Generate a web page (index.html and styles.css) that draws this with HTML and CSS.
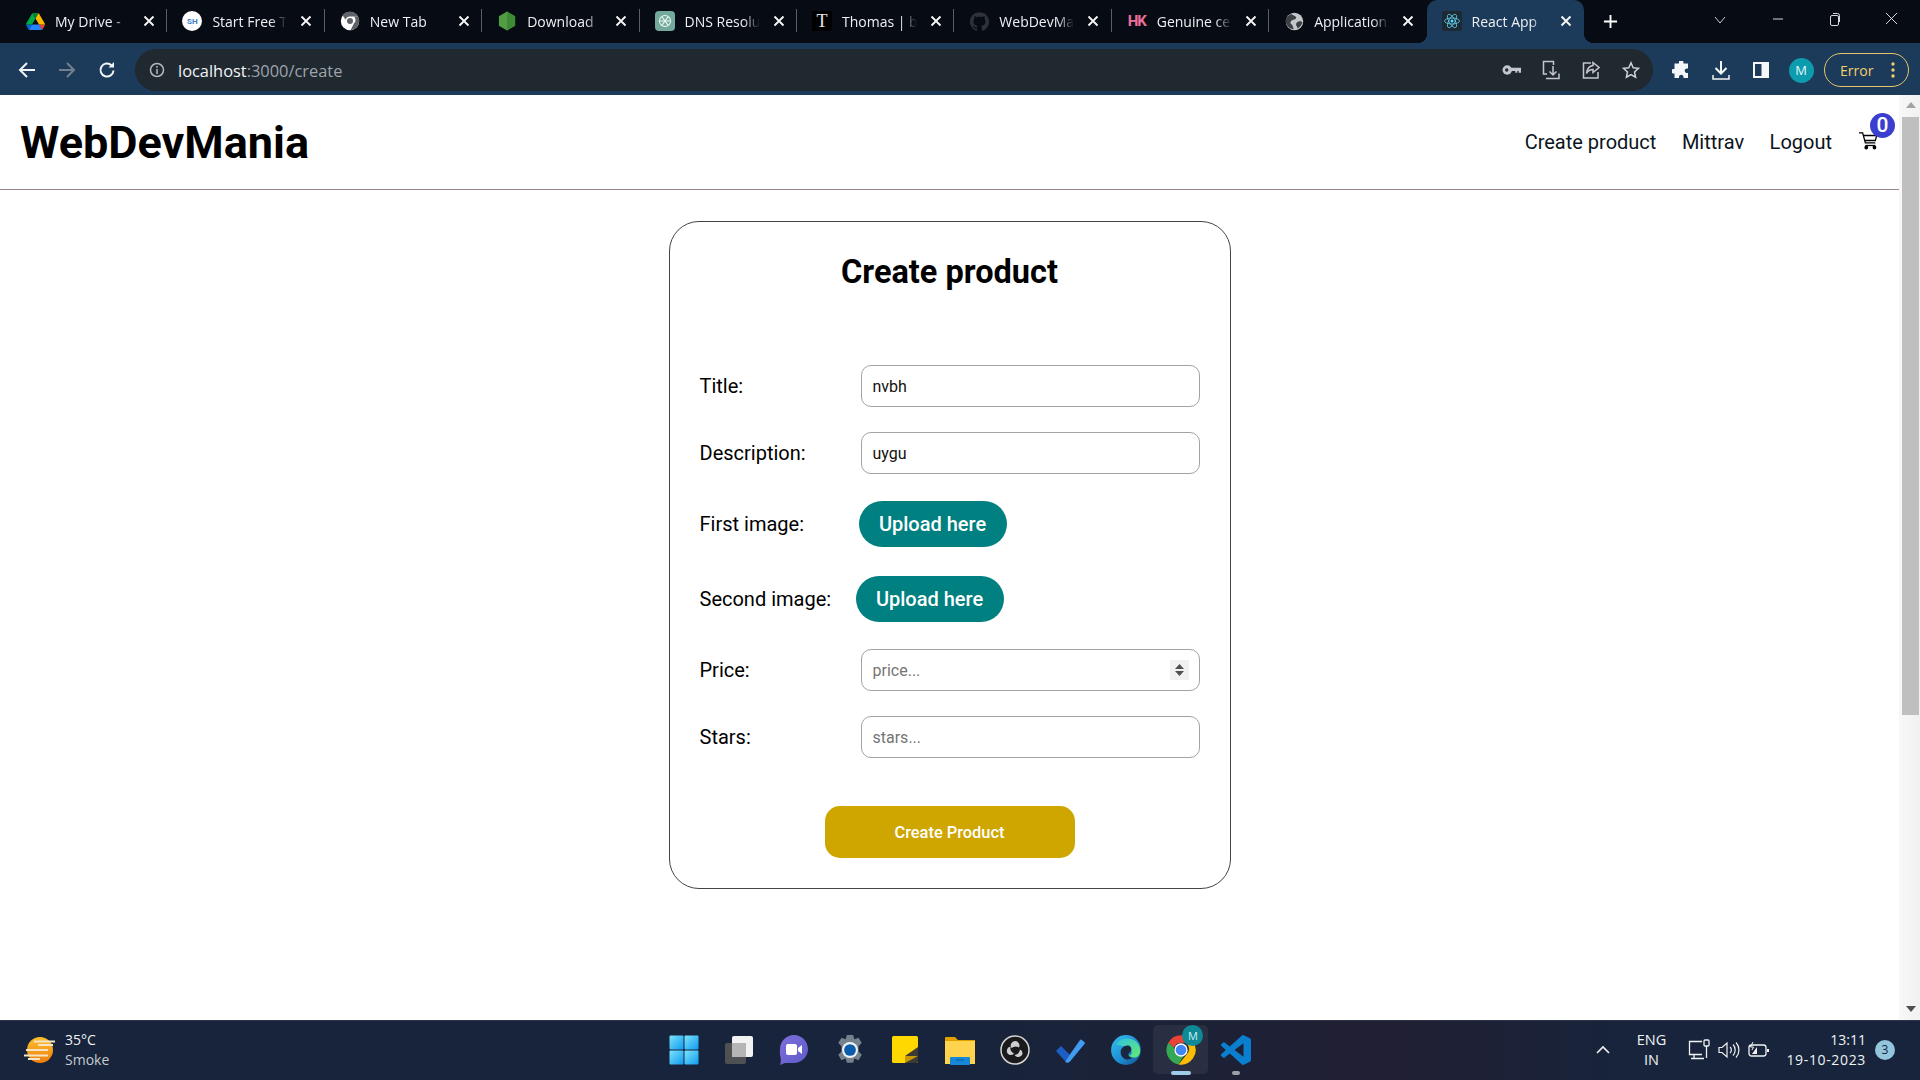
FILE: index.html
```html
<!DOCTYPE html>
<html lang="en">
<head>
<meta charset="utf-8">
<title>React App</title>
<link rel="stylesheet" href="styles.css">
</head>
<body>
<svg class="defs" width="0" height="0"><symbol id="close" viewBox="0 0 12 12"><path d="M1.500 1.500l9 9M10.500 1.500l-9 9" stroke="#f6f6f6" stroke-width="1.900" fill="none"/></symbol></svg>
<div class="tabstrip">
  <div class="tab"><span class="favicon"><svg viewBox="0 0 87.3 78" width="19" height="17"><path d="m6.6 66.85 3.85 6.65c.8 1.4 1.95 2.5 3.3 3.3l13.75-23.8h-27.5c0 1.55.4 3.1 1.2 4.5z" fill="#0066da"/><path d="m43.65 25-13.75-23.8c-1.35.8-2.5 1.9-3.3 3.3l-25.4 44a9.06 9.06 0 0 0 -1.2 4.5h27.5z" fill="#00ac47"/><path d="m73.55 76.8c1.35-.8 2.5-1.9 3.3-3.3l1.6-2.75 7.65-13.25c.8-1.4 1.2-2.95 1.2-4.5h-27.502l5.852 11.5z" fill="#ea4335"/><path d="m43.65 25 13.75-23.8c-1.35-.8-2.9-1.2-4.5-1.2h-18.5c-1.6 0-3.15.45-4.5 1.2z" fill="#00832d"/><path d="m59.8 53h-32.3l-13.75 23.8c1.35.8 2.9 1.2 4.5 1.2h50.8c1.6 0 3.15-.45 4.5-1.2z" fill="#2684fc"/><path d="m73.4 26.5-12.7-22c-.8-1.4-1.95-2.5-3.3-3.3l-13.75 23.8 16.15 28h27.45c0-1.55-.4-3.1-1.2-4.5z" fill="#ffba00"/></svg></span><span class="tab-title">My Drive -</span><svg class="tab-x"><use href="#close"/></svg></div>
  <div class="tab"><span class="favicon fav-sh">SH</span><span class="tab-title">Start Free T</span><svg class="tab-x"><use href="#close"/></svg></div>
  <div class="tab"><span class="favicon"><svg viewBox="0 0 24 24" width="20" height="20"><circle cx="12" cy="12" r="11" fill="#fff"/><path d="M12 1a11 11 0 0 1 9.6 5.600H12a5.500 5.500 0 0 0-5.300 4L3 5a11 11 0 0 1 9-4z" fill="#5f6368"/><path d="M21.600 6.600a11 11 0 0 1-9 16.400l4.200-8.200a5.500 5.500 0 0 0 0-8.200z" fill="#5f6368"/><circle cx="12" cy="12" r="3.600" fill="#5f6368"/></svg></span><span class="tab-title">New Tab</span><svg class="tab-x"><use href="#close"/></svg></div>
  <div class="tab"><span class="favicon"><svg viewBox="0 0 20 22" width="18" height="20"><path d="M10 0.500l9 5.200v10.600l-9 5.200-9-5.200V5.700z" fill="#539e43"/><path d="M10 0.500l9 5.200v10.600l-9 5.200z" fill="#3f8a37"/></svg></span><span class="tab-title">Download</span><svg class="tab-x"><use href="#close"/></svg></div>
  <div class="tab"><span class="favicon fav-gpt"><svg viewBox="0 0 20 20" width="16" height="16" fill="none" stroke="#e9f5f1" stroke-width="1.300"><circle cx="10" cy="10" r="7"/><path d="M6 4.500l8 11M14 4.500l-8 11M3 10h14"/></svg></span><span class="tab-title">DNS Resolu</span><svg class="tab-x"><use href="#close"/></svg></div>
  <div class="tab"><span class="favicon fav-t">T</span><span class="tab-title">Thomas | b</span><svg class="tab-x"><use href="#close"/></svg></div>
  <div class="tab"><span class="favicon"><svg viewBox="0 0 24 24" width="19" height="19"><path fill="#2f3338" d="M12 .297c-6.63 0-12 5.373-12 12 0 5.303 3.438 9.8 8.205 11.385.6.113.82-.258.82-.577 0-.285-.01-1.04-.015-2.04-3.338.724-4.042-1.61-4.042-1.61C4.422 18.070 3.633 17.700 3.633 17.700c-1.087-.744.084-.729.084-.729 1.205.084 1.838 1.236 1.838 1.236 1.070 1.835 2.809 1.305 3.495.998.108-.776.417-1.305.76-1.605-2.665-.3-5.466-1.332-5.466-5.930 0-1.310.465-2.380 1.235-3.220-.135-.303-.54-1.523.105-3.176 0 0 1.005-.322 3.300 1.230.96-.267 1.980-.399 3-.405 1.020.006 2.040.138 3 .405 2.280-1.552 3.285-1.230 3.285-1.230.645 1.653.24 2.873.12 3.176.765.84 1.230 1.910 1.230 3.220 0 4.610-2.805 5.625-5.475 5.920.42.36.81 1.096.81 2.220 0 1.606-.015 2.896-.015 3.286 0 .315.21.69.825.57C20.565 22.092 24 17.592 24 12.297c0-6.627-5.373-12-12-12"/></svg></span><span class="tab-title">WebDevMa</span><svg class="tab-x"><use href="#close"/></svg></div>
  <div class="tab"><span class="favicon fav-hk">HK</span><span class="tab-title">Genuine ce</span><svg class="tab-x"><use href="#close"/></svg></div>
  <div class="tab"><span class="favicon"><svg viewBox="0 0 24 24" width="19" height="19"><circle cx="12" cy="12" r="11" fill="#c4c7c9"/><path d="M8 2.500c2 2 5 2 6 4s-3 3-5 4-3 4-1 5 2 4 3 6c-5 0-9-4-10-9s3-8 7-10zM17 12c3-1 4 0 5 1-1 4-3 6-6 8 0-3-2-3-2-5s1-3 3-4z" fill="#3b4045"/></svg></span><span class="tab-title">Application</span><svg class="tab-x"><use href="#close"/></svg></div>
  <div class="tab tab-active"><span class="favicon fav-react"><svg viewBox="-12 -12 24 24" width="18" height="18" fill="none" stroke="#61dafb" stroke-width="1"><circle r="2" fill="#61dafb" stroke="none"/><ellipse rx="10" ry="4"/><ellipse rx="10" ry="4" transform="rotate(60)"/><ellipse rx="10" ry="4" transform="rotate(120)"/></svg></span><span class="tab-title">React App</span><svg class="tab-x"><use href="#close"/></svg></div>
  <div class="newtab"><svg viewBox="0 0 16 16" width="15" height="15"><path d="M8 1v14M1 8h14" stroke="#fff" stroke-width="2"/></svg></div>
  <div class="winctl">
    <span class="win-chevron"><svg viewBox="0 0 12 8" width="12" height="8" fill="none" stroke="#c8ccd0"><path d="M1 1l5 6 5-6"/></svg></span>
    <span class="winbtn"><svg viewBox="0 0 12 12" width="12" height="12"><path d="M1 6h10" stroke="#d6d8da"/></svg></span>
    <span class="winbtn"><svg viewBox="0 0 12 14" width="12" height="14" fill="none" stroke="#d6d8da"><rect x="1.500" y="3.500" width="8" height="10" rx="1.500"/><path d="M4 1.500h4.500a2 2 0 0 1 2 2V10"/></svg></span>
    <span class="winbtn"><svg viewBox="0 0 14 14" width="13" height="13"><path d="M1 1l12 12M13 1L1 13" stroke="#e8eaec"/></svg></span>
  </div>
</div>

<div class="toolbar">
  <span class="tbtn"><svg viewBox="0 0 18 18" width="18" height="18" fill="none" stroke="#f2f4f6" stroke-width="2"><path d="M17 9H2.500M9 2L2 9l7 7"/></svg></span>
  <span class="tbtn"><svg viewBox="0 0 18 18" width="18" height="18" fill="none" stroke="#73818f" stroke-width="2"><path d="M1 9h14.500M9 2l7 7-7 7"/></svg></span>
  <span class="tbtn"><svg viewBox="0 0 18 18" width="18" height="18" fill="none" stroke="#f2f4f6" stroke-width="2"><path d="M15.500 9.500a6.500 6.500 0 1 1-2-5.200"/><path d="M16 1v5.500h-5.500z" fill="#f2f4f6" stroke="none"/></svg></span>
  <div class="omnibox">
    <span class="omni-info"><svg viewBox="0 0 16 16" width="16" height="16" fill="none" stroke="#b4b9be" stroke-width="1.500"><circle cx="8" cy="8" r="6.500"/><path d="M8 7v5M8 4v1.700"/></svg></span>
    <span class="url"><span class="url-host">localhost</span>:3000/create</span>
    <span class="omni-actions">
      <span class="tbtn"><svg viewBox="0 0 20 12" width="19" height="12" fill="#c3c7cb"><circle cx="5.500" cy="6" r="5"/><path d="M9 3.500h11V9h-2.500V7h-1.500v2h-2V7H9z"/><circle cx="5" cy="6" r="1.800" fill="#202830"/></svg></span>
      <span class="tbtn"><svg viewBox="0 0 18 20" width="18" height="20" fill="none" stroke="#c3c7cb" stroke-width="1.500"><path d="M5 14H1.500V1.500h10V5"/><path d="M11 6v9M7.500 11.500l3.500 3.500 3.500-3.500"/><path d="M4 18.500h13v-5"/></svg></span>
      <span class="tbtn"><svg viewBox="0 0 18 18" width="18" height="18" fill="none" stroke="#c3c7cb" stroke-width="1.500"><path d="M9 2h-7.500v15h14.500v-6"/><path d="M11 1.500l6 5-6 5V8.500c-3 0-5 1-6.500 4C5 8 7 5 11 4.500z"/></svg></span>
      <span class="tbtn"><svg viewBox="0 0 18 18" width="18" height="18" fill="none" stroke="#d0d3d6" stroke-width="1.500"><path d="M9 1.800l2.200 4.900 5.300.6-4 3.600 1.100 5.300L9 13.500l-4.600 2.700 1.100-5.300-4-3.600 5.300-.6z"/></svg></span>
    </span>
  </div>
  <span class="tbtn tbtn-first"><svg viewBox="0 0 18 18" width="18" height="18" fill="#f4f6f8"><path d="M7 1a2.200 2.200 0 0 1 4.400 0v1.500H16v5h-1.500a2.300 2.300 0 0 0 0 4.500H16v5H11.500v-1.500a2.300 2.300 0 0 0-4.500 0V17H2.500v-4.500H1a2.300 2.300 0 0 1 0-4.500h1.500V2.500H7z"/></svg></span>
  <span class="tbtn"><svg viewBox="0 0 18 20" width="18" height="20" fill="none" stroke="#f4f6f8" stroke-width="2"><path d="M9 1v12M3.500 8L9 13.500 14.500 8"/><path d="M1 15v4h16v-4" stroke-width="1.500"/></svg></span>
  <span class="tbtn"><svg viewBox="0 0 16 16" width="16" height="16"><path d="M0 0h16v16H0z" fill="#f4f6f8"/><path d="M2 2h6.500v12H2z" fill="#1c3b5a"/></svg></span>
  <span class="tbtn"><span class="avatar">M</span></span>
  <div class="errpill"><span>Error</span><svg viewBox="0 0 4 16" width="4" height="16" fill="#f0cf6e"><circle cx="2" cy="2" r="1.700"/><circle cx="2" cy="8" r="1.700"/><circle cx="2" cy="14" r="1.700"/></svg></div>
</div>

<div class="viewport">
  <div class="page">
    <header class="header">
      <h1 class="brand">WebDevMania</h1>
      <nav class="nav">
        <a class="nav-link">Create product</a>
        <a class="nav-link">Mittrav</a>
        <a class="nav-link">Logout</a>
        <span class="cart">
          <svg viewBox="0 0 22 20" width="20" height="19" fill="none" stroke="#000" stroke-width="1.400"><path d="M0 1.500h4l3 11h11"/><path d="M5 4.500h14.500l-1.500 5.500H6.500"/><path d="M7 15.500h11"/><circle cx="8" cy="17.700" r="1.400" fill="#000"/><circle cx="17" cy="17.700" r="1.400" fill="#000"/></svg>
          <span class="cart-badge">0</span>
        </span>
      </nav>
    </header>
    <main class="main">
      <form class="card">
        <h2 class="card-title">Create product</h2>
        <div class="row row-first"><label class="label">Title:</label><input class="field" type="text" value="nvbh"></div>
        <div class="row"><label class="label">Description:</label><input class="field" type="text" value="uygu"></div>
        <div class="row row-up"><label class="label label-first">First image:</label><span class="upload">Upload here</span></div>
        <div class="row row-up2"><label class="label label-second">Second image:</label><span class="upload">Upload here</span></div>
        <div class="row row-after"><label class="label">Price:</label><input class="field" type="number" placeholder="price..."></div>
        <div class="row"><label class="label">Stars:</label><input class="field" type="text" placeholder="stars..."></div>
        <button class="submit" type="button">Create Product</button>
      </form>
    </main>
  </div>
  <div class="scrollbar">
    <span class="arrow-up"></span>
    <span class="thumb"></span>
    <span class="arrow-down"></span>
  </div>
</div>

<footer class="taskbar">
  <div class="tb-left">
    <svg class="weather" viewBox="0 0 32 28" width="32" height="28"><defs><linearGradient id="sun" x1="0" y1="0" x2="0" y2="1"><stop offset="0" stop-color="#fdc02f"/><stop offset="1" stop-color="#ef7d10"/></linearGradient></defs><circle cx="16" cy="14" r="13" fill="url(#sun)"/><path d="M10 5.500h21M14 9h15M2 14h22M0 19.500h24M4 23h12" stroke="#f4e6c4" stroke-width="2"/></svg>
    <div class="weather-text"><div class="temp">35°C</div><div class="cond">Smoke</div></div>
  </div>
  <div class="tb-center">
    <span class="tb-app"><svg viewBox="0 0 30 30" width="30" height="30"><defs><linearGradient id="win" x1="0" y1="0" x2="1" y2="1"><stop offset="0" stop-color="#7be4fb"/><stop offset="1" stop-color="#0f9af0"/></linearGradient></defs><rect x="0.500" y="0.500" width="14" height="14" rx="1" fill="url(#win)"/><rect x="15.500" y="0.500" width="14" height="14" rx="1" fill="url(#win)"/><rect x="0.500" y="15.500" width="14" height="14" rx="1" fill="url(#win)"/><rect x="15.500" y="15.500" width="14" height="14" rx="1" fill="url(#win)"/></svg></span>
    <span class="tb-app"><svg viewBox="0 0 30 30" width="30" height="30"><rect x="8" y="1" width="21" height="21" rx="2" fill="#f2f2f2"/><rect x="1" y="8" width="21" height="21" rx="2" fill="#555" fill-opacity=".9"/><rect x="8" y="8" width="14" height="14" fill="#b5b5b5"/></svg></span>
    <span class="tb-app"><svg viewBox="0 0 30 32" width="30" height="32"><defs><linearGradient id="chat" x1="0" y1="0" x2="1" y2="1"><stop offset="0" stop-color="#7f6fdc"/><stop offset="1" stop-color="#5e5ac8"/></linearGradient></defs><path d="M15 1c8 0 14 6.500 14 14s-6 14-14 14H6l-5 2c1-3 1-5 .5-8C.5 20 1 17 1 15 1 7.500 7 1 15 1z" fill="url(#chat)"/><rect x="7" y="10" width="11" height="11" rx="2" fill="#fff"/><path d="M19 14l4-3v9l-4-3z" fill="#fff"/></svg></span>
    <span class="tb-app"><svg viewBox="0 0 30 30" width="32" height="32"><path d="M12 1h6l1 4 4-1.500 3 5-3 3v5l3 3-3 5-4-1.500-1 4h-6l-1-4-4 1.500-3-5 3-3v-5l-3-3 3-5 4 1.500z" fill="#74808c"/><circle cx="15" cy="15" r="7.500" fill="#eef1f4"/><circle cx="15" cy="15" r="5.500" fill="#0b5cad"/></svg></span>
    <span class="tb-app"><svg viewBox="0 0 26 27" width="26" height="27"><rect x="0" y="0" width="26" height="27" rx="1.500" fill="#ffd800"/><path d="M13 27v-7l13-9v14.500a1.500 1.500 0 0 1-1.500 1.500z" fill="#3b3a33"/><path d="M13 20h13l-13 7z" fill="#c99700"/></svg></span>
    <span class="tb-app"><svg viewBox="0 0 30 30" width="30" height="30"><path d="M0 3a1 1 0 0 1 1-1h9l3 3h17v6H0z" fill="#e3a100"/><path d="M0 6h30v23H0z" fill="#ffd34d"/><rect x="5" y="22" width="20" height="8" rx="1" fill="#1787d8"/><path d="M11 25h8" stroke="#0b5c9f"/></svg></span>
    <span class="tb-app"><svg viewBox="0 0 30 30" width="30" height="30"><circle cx="15" cy="15" r="14" fill="#1a1a1d" stroke="#d6d6d6" stroke-width="1.500"/><g fill="#cfcfcf"><path d="M15 6a4.500 4.500 0 0 1 4 6.500 6.500 6.500 0 0 0-7.500 .5A4.500 4.500 0 0 1 15 6z"/><path d="M8 19a4.500 4.500 0 0 1 2.500-7.500 6.500 6.500 0 0 0 3.500 7A4.500 4.500 0 0 1 8 19z"/><path d="M22.500 19a4.500 4.500 0 0 1-8 1 6.500 6.500 0 0 0 5.500-5.500A4.500 4.500 0 0 1 22.500 19z"/></g></svg></span>
    <span class="tb-app"><svg viewBox="0 0 30 26" width="30" height="26"><path d="M1 14l5-5 9 9-5 6z" fill="#1b5fc4"/><path d="M10 24.500L25 3a1 1 0 0 1 1.500-.2l3 2.500a1 1 0 0 1 .2 1.400L15 24.500a3 3 0 0 1-5 0z" fill="#3f9cf0"/></svg></span>
    <span class="tb-app"><svg viewBox="0 0 30 30" width="32" height="32"><defs><linearGradient id="edgeA" x1="0" y1="0" x2="1" y2="1"><stop offset="0" stop-color="#35c1f1"/><stop offset=".6" stop-color="#1b8ad0"/><stop offset="1" stop-color="#114a8b"/></linearGradient><linearGradient id="edgeB" x1="0" y1="0" x2="1" y2="1"><stop offset="0" stop-color="#2fc2e0"/><stop offset="1" stop-color="#66eb6e"/></linearGradient></defs><circle cx="15" cy="15" r="14" fill="url(#edgeA)"/><path d="M6 10c3-7 15-8 20-1 3 4 3 10 0 12-3 2-8 1-8-1 2 0 3-2 2-4-2-4-9-5-14-6z" fill="url(#edgeB)"/><path d="M10 17c0-4 4-7 8-6 2 1 3 4 1 6-3 1-2 5 2 5-4 4-11 1-11-5z" fill="#1b2740"/></svg></span>
    <span class="tb-app tb-active"><svg viewBox="0 0 24 24" width="32" height="32"><path d="M12 1a11 11 0 0 1 9.500 5.500H12A5.500 5.500 0 0 0 6.800 10.300L2.500 6.500A11 11 0 0 1 12 1z" fill="#ea4335"/><path d="M2.500 6.500a11 11 0 0 0 7.700 16.350L14 16.500a5.500 5.500 0 0 1-7.200-6.200z" fill="#34a853"/><path d="M21.500 6.500A11 11 0 0 1 10.200 22.850L16.500 15a5.500 5.500 0 0 0-1-8.500z" fill="#fbbc04"/><circle cx="12" cy="12" r="5" fill="#fff"/><circle cx="12" cy="12" r="4" fill="#4285f4"/></svg><span class="chrome-m">M</span><span class="ind ind-on"></span></span>
    <span class="tb-app"><svg viewBox="0 0 24 24" width="30" height="30"><path fill="#0a7fcf" d="M23.150 2.587L18.210.21a1.494 1.494 0 0 0-1.705.29l-9.460 8.630-4.120-3.128a.999.999 0 0 0-1.276.057L.327 7.261A1 1 0 0 0 .326 8.740L3.899 12 .326 15.260a1 1 0 0 0 .001 1.479L1.650 17.940a.999.999 0 0 0 1.276.057l4.120-3.128 9.460 8.630a1.492 1.492 0 0 0 1.704.29l4.942-2.377A1.500 1.500 0 0 0 24 20.060V3.939a1.500 1.500 0 0 0-.85-1.352zm-5.146 14.861L10.826 12l7.178-5.448v10.896z"/></svg><span class="ind"></span></span>
  </div>
  <div class="tb-right">
    <svg class="tray-chev" viewBox="0 0 14 9" width="14" height="9" fill="none" stroke="#f0f2f4" stroke-width="1.600"><path d="M1 8l6-6 6 6"/></svg>
    <div class="lang"><div>ENG</div><div>IN</div></div>
    <span class="tray"><svg viewBox="0 0 22 22" width="22" height="22" fill="none" stroke="#f0f2f4" stroke-width="1.300"><path d="M14 2.500H1.500v13H14M6 15.500v3.500M3 19.500h13"/><rect x="16" y="1" width="5" height="6" rx="1"/><path d="M18.500 7v12"/></svg></span>
    <span class="tray"><svg viewBox="0 0 22 18" width="22" height="18" fill="none" stroke="#f0f2f4" stroke-width="1.200"><path d="M1 6.500h3L9 2v14L4 11.500H1z"/><path d="M12 6a4 4 0 0 1 0 6M15 3.500a8 8 0 0 1 0 11M18 1.500a11 11 0 0 1 0 15"/></svg></span>
    <span class="tray"><svg viewBox="0 0 22 18" width="22" height="18" fill="none" stroke="#f0f2f4" stroke-width="1.300"><rect x="1" y="4" width="17" height="11" rx="2.500"/><path d="M20 8v3" stroke-width="2"/><path d="M4 13l5-7v7z" fill="#f0f2f4" stroke="none"/><path d="M5 1L2.500 6h3L4 9" stroke-width="1"/></svg></span>
    <div class="clock"><div>13:11</div><div class="date">19-10-2023</div></div>
    <span class="notif">3</span>
  </div>
</footer>
</body>
</html>
```

FILE: styles.css
```css
* { box-sizing: border-box; }
html, body { margin: 0; height: 100%; overflow: hidden; }
body { display: flex; flex-direction: column; height: 1080px; background: #fff; font-family: Roboto, sans-serif; color: #000; }
.defs { display: none; }

/* tab strip */
.tabstrip { display: flex; align-items: stretch; height: 43px; padding-left: 10px; background: #060b14; font-family: "Open Sans", sans-serif; font-size: 14px; color: #eef0f2; flex: none; }
.tab { position: relative; flex: 0 0 157.4px; display: flex; align-items: center; padding: 0 0 1px 15px; }
.tab::after { content: ""; position: absolute; right: 0; top: 9px; bottom: 11px; width: 1px; background: #5a5f66; }
.tab:nth-child(9)::after, .tab-active::after { display: none; }
.tab-active { background: #1c3b5a; border-radius: 10px 10px 0 0; }
.tab-active::before { content: ""; position: absolute; left: -10px; bottom: 0; width: 10px; height: 10px; background: radial-gradient(circle at 0 0, transparent 10px, #1c3b5a 10.500px); }
.newtab::before { content: ""; position: absolute; left: 0; bottom: 0; width: 10px; height: 10px; background: radial-gradient(circle at 100% 0, transparent 10px, #1c3b5a 10.500px); }
.favicon { flex: 0 0 20px; width: 20px; height: 20px; display: flex; align-items: center; justify-content: center; }
.fav-sh { border-radius: 50%; background: #fff; color: #3d7cc0; font-size: 8px; font-weight: 700; font-family: Roboto, sans-serif; }
.fav-gpt { border-radius: 4px; background: #74aa9c; }
.fav-t { background: #000; color: #e8e8e8; font-family: "Liberation Serif", serif; font-size: 18px; }
.fav-hk { color: #ec6f9a; font-family: Roboto, sans-serif; font-weight: 700; font-size: 15px; letter-spacing: -1px; }
.fav-react { background: #1e2a33; border-radius: 3px; }
.tab-title { margin-left: 10px; width: 75px; white-space: nowrap; overflow: hidden; -webkit-mask-image: linear-gradient(90deg, #000 78%, transparent 100%); mask-image: linear-gradient(90deg, #000 78%, transparent 100%); }
.tab-x { margin-left: 13px; width: 12px; height: 12px; flex: none; }
.newtab { position: relative; flex: 0 0 54px; display: flex; align-items: center; justify-content: center; padding-bottom: 1px; }
.winctl { margin-left: auto; display: flex; align-items: center; }
.win-chevron { width: 40px; display: flex; justify-content: center; margin-right: 9px; padding-bottom: 4px; }
.winbtn { width: 57px; display: flex; justify-content: center; padding-bottom: 6px; }

/* toolbar */
.toolbar { display: flex; align-items: center; height: 52px; padding: 2px 11px 0 7px; background: #1c3b5a; flex: none; }
.tbtn { flex: 0 0 40px; width: 40px; height: 36px; display: flex; align-items: center; justify-content: center; }
.tbtn-first { margin-left: 8px; }
.omnibox { flex: 0 0 1518px; margin-left: 8px; height: 42px; border-radius: 21px; background: #202830; display: flex; align-items: center; padding-right: 2px; }
.omni-info { flex: 0 0 16px; margin-left: 14px; display: flex; }
.url { margin-left: 13px; font-family: "Open Sans", sans-serif; font-size: 16.400px; color: #9ea4aa; }
.url-host { color: #f2f4f6; }
.omni-actions { margin-left: auto; display: flex; }
.avatar { width: 25px; height: 25px; border-radius: 50%; background: #0d9cae; color: #e6f6f8; display: flex; align-items: center; justify-content: center; font-family: "Open Sans", sans-serif; font-size: 13px; }
.errpill { margin-left: 3px; width: 85px; height: 34px; border: 1.500px solid #e8c468; border-radius: 17px; display: flex; align-items: center; justify-content: space-between; padding: 0 13px 0 15px; color: #f0cf6e; font-family: "Open Sans", sans-serif; font-size: 14px; }

/* page */
.viewport { flex: 1; display: flex; min-height: 0; }
.page { flex: 1; min-width: 0; display: flex; flex-direction: column; }
.header { display: flex; align-items: center; justify-content: space-between; height: 95px; padding: 0 20px 0 20px; border-bottom: 1px solid #9b868c; flex: none; }
.brand { margin: 0; font-size: 45px; font-weight: 700; line-height: 1; }
.nav { display: flex; align-items: center; gap: 25.500px; font-size: 20px; color: #0c1420; }
.cart { position: relative; display: flex; width: 20px; margin: -4px 0 0 1.500px; }
.cart-badge { position: absolute; left: 11px; top: -18px; width: 25px; height: 25px; border-radius: 50%; background: #3a3fd0; color: #fff; font-size: 21px; font-weight: 500; display: flex; align-items: center; justify-content: center; }
.main { display: flex; justify-content: center; padding-top: 31px; }
.card { width: 562px; height: 668px; border: 1px solid #444; border-radius: 30px; padding: 31px 30px 0 30px; display: flex; flex-direction: column; }
.card-title { margin: 0; font-size: 32.500px; font-weight: 700; text-align: center; line-height: 38px; }
.row { display: flex; align-items: center; margin-top: 25px; }
.row-first { margin-top: 74px; }
.row-up { margin-top: 27px; }
.row-up2 { margin-top: 29px; }
.row-after { margin-top: 27px; }
.label { flex: 0 0 161px; font-size: 20px; color: #000; }
.label-first { flex-basis: 159px; }
.label-second { flex-basis: 156px; }
.field { flex: 0 0 339px; width: 339px; height: 42px; border: 1px solid #a3a3a3; border-radius: 10px; padding: 0 10px 0 11px; font-family: Roboto, sans-serif; font-size: 16px; color: #111; background: #fff; outline: none; }
.field::placeholder { color: #757575; opacity: 1; }
.field::-webkit-inner-spin-button { -webkit-appearance: none; opacity: 1; width: 19px; height: 20px; background: #f1f1f1 url("data:image/svg+xml,%3Csvg xmlns='http://www.w3.org/2000/svg' width='19' height='20'%3E%3Cpath d='M9.500 4l4.500 5H5zM9.500 16L5 11h9z' fill='%23505050'/%3E%3C/svg%3E") no-repeat center; }
.upload { width: 148px; height: 46px; border-radius: 23px; background: #008080; color: #fff; font-size: 20px; font-weight: 500; display: flex; align-items: center; justify-content: center; }
.submit { align-self: center; margin-top: 48px; width: 250px; height: 52px; border: 0; border-radius: 15px; background: #cfa600; color: #fff; font-family: Roboto, sans-serif; font-size: 16.400px; font-weight: 500; }

/* scrollbar */
.scrollbar { flex: 0 0 21px; display: flex; flex-direction: column; align-items: center; padding: 7px 0 8px 2px; background: linear-gradient(90deg, #f8f8f8, #f1f1f1); }
.arrow-up { width: 0; height: 0; border: 5px solid transparent; border-top: 0; border-bottom: 6px solid #a3a3a3; }
.arrow-down { margin-top: auto; width: 0; height: 0; border: 5px solid transparent; border-bottom: 0; border-top: 6px solid #505050; }
.thumb { margin-top: 9px; width: 17px; height: 598px; background: #bfbfbf; }

/* taskbar */
.taskbar { flex: none; height: 60px; padding-bottom: 2px; display: grid; grid-template-columns: 1fr auto 1fr; align-items: center; background: linear-gradient(90deg, #17243b 0%, #17243b 50%, #211f33 72%, #17243b 85%); border-top: 1px solid #2a3444; font-family: "Open Sans", sans-serif; color: #f0f2f4; font-size: 14px; }
.tb-left { display: flex; align-items: center; padding-left: 24px; gap: 9px; }
.weather-text { line-height: 20px; }
.cond { color: #c5cad1; }
.tb-center { display: flex; align-items: center; }
.tb-app { position: relative; width: 55.200px; height: 49px; display: flex; align-items: center; justify-content: center; }
.tb-active { background: rgba(255,255,255,.06); border-radius: 5px; }
.chrome-m { position: absolute; right: 5px; top: 0; width: 21px; height: 21px; border-radius: 50%; background: #0d8a96; color: #cfeef1; font-size: 11px; display: flex; align-items: center; justify-content: center; }
.ind { position: absolute; left: 50%; bottom: -1px; width: 8px; height: 4px; margin-left: -4px; border-radius: 2px; background: #9aa0a8; }
.ind-on { width: 20px; margin-left: -10px; background: #9fcbe6; }
.tb-right { display: flex; align-items: center; justify-content: flex-end; padding-right: 25px; }
.tray-chev { margin-right: 22px; }
.lang { width: 38px; text-align: center; line-height: 20px; margin-right: 14px; font-size: 14.500px; }
.tray { width: 30px; display: flex; justify-content: center; }
.clock { margin-left: 12px; text-align: right; line-height: 20px; }
.date { letter-spacing: .65px; }
.notif { margin-left: 9px; width: 20px; height: 20px; border-radius: 50%; background: #93c5dc; color: #16233a; font-size: 12px; display: flex; align-items: center; justify-content: center; }
```
